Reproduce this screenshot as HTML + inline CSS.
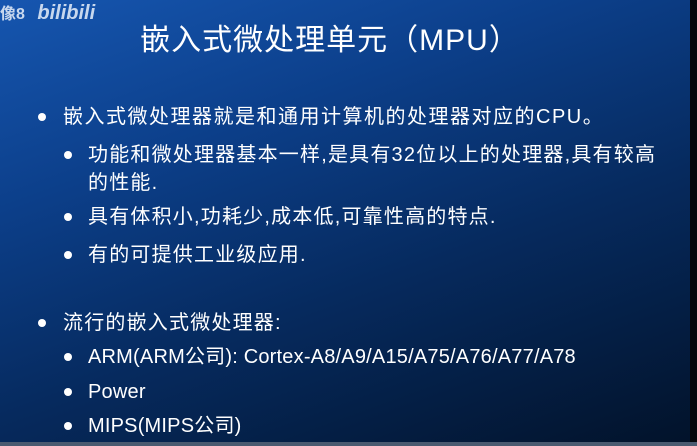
<!DOCTYPE html>
<html><head><meta charset="utf-8"><style>
html,body{margin:0;padding:0;}
body{width:697px;height:446px;overflow:hidden;position:relative;
background:linear-gradient(160deg,#1656b0 0%,#0c3f8a 30%,#062a5e 60%,#021229 100%);
font-family:"Liberation Sans","Noto Sans CJK SC",sans-serif;color:#fff;}
.edge{position:absolute;right:0;top:0;width:7px;height:446px;background:#05070c;}
.bot{position:absolute;left:0;bottom:0;width:697px;height:4px;background:#4a5a70;}
.t{position:absolute;white-space:nowrap;font-size:20px;line-height:22px;letter-spacing:1.2px;}
.d{position:absolute;width:8px;height:8px;border-radius:50%;background:#fff;}
.title{position:absolute;left:0;width:660px;text-align:center;top:15px;font-size:30px;letter-spacing:1px;}
.wm{position:absolute;left:0;top:0;font-size:16px;font-weight:bold;color:#c8d8ee;}
</style></head><body>
<div class="wm">像8 <span style="font-size:20px;font-style:italic;margin-left:8px">bilibili</span></div>
<div class="title">嵌入式微处理单元（MPU）</div>
<div class="d" style="left:38px;top:113px"></div>
<div class="t" style="left:63px;top:106px;letter-spacing:1.5px">嵌入式微处理器就是和通用计算机的处理器对应的CPU。</div>
<div class="d" style="left:64px;top:151px"></div>
<div class="t" style="left:88px;top:144px">功能和微处理器基本一样,是具有32位以上的处理器,具有较高</div>
<div class="t" style="left:88px;top:172px">的性能.</div>
<div class="d" style="left:64px;top:213px"></div>
<div class="t" style="left:88px;top:206px">具有体积小,功耗少,成本低,可靠性高的特点.</div>
<div class="d" style="left:64px;top:251px"></div>
<div class="t" style="left:88px;top:244px">有的可提供工业级应用.</div>
<div class="d" style="left:38px;top:319px"></div>
<div class="t" style="left:63px;top:312px">流行的嵌入式微处理器:</div>
<div class="d" style="left:64px;top:353px"></div>
<div class="t" style="left:88px;top:346px;letter-spacing:0.2px">ARM(ARM公司): Cortex-A8/A9/A15/A75/A76/A77/A78</div>
<div class="d" style="left:64px;top:388px"></div>
<div class="t" style="left:88px;top:381px;letter-spacing:0.2px">Power</div>
<div class="d" style="left:64px;top:422px"></div>
<div class="t" style="left:88px;top:415px;letter-spacing:0.2px">MIPS(MIPS公司)</div>
<div class="edge"></div>
<div class="bot"></div>
</body></html>
